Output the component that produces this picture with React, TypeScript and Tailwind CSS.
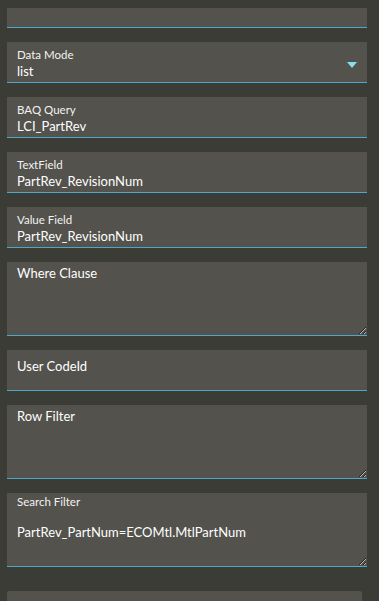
import React from "react";

const font = { fontFamily: '"Lato", "Noto Sans", sans-serif' };

function InputField({ label, value }: { label: string; value: string }) {
  return (
    <div className="h-[41px] bg-[#53524c] border-b border-[#4ea6cf] px-[10px] pt-[6px]">
      <div className="text-[11.5px] leading-[14px] text-[#f2f2f2]">{label}</div>
      <div className="text-[13px] leading-[18px] text-white">{value}</div>
    </div>
  );
}

function AreaField({ label, value }: { label: string; value?: string }) {
  return (
    <div className="h-[74px] bg-[#53524c] border-b border-[#4ea6cf] flex flex-col">
      {value ? (
        <div className="px-[10px] pt-[2px] text-[11.5px] leading-[14px] text-[#f2f2f2]">{label}</div>
      ) : (
        <div className="px-[10px] pt-[2px] text-[13px] leading-[18px] text-white">{label}</div>
      )}
      <textarea
        readOnly
        value={value ?? ""}
        className={`flex-1 w-full bg-transparent text-white text-[13px] leading-[18px] px-[10px] outline-none resize-y ${value ? "pt-[14px]" : ""}`}
        style={font}
      />
    </div>
  );
}

export default function App() {
  return (
    <div className="min-h-[601px] bg-[#3c3c37] pl-[7px] pr-[12px] pt-[8px] overflow-hidden" style={font}>
      <div className="flex flex-col gap-[14px]">
        <div className="h-[20px] bg-[#53524c] border-b border-[#4ea6cf]" />

        <div className="relative h-[41px] bg-[#53524c] border-b border-[#4ea6cf] px-[10px] pt-[6px]">
          <div className="text-[11.5px] leading-[14px] text-[#f2f2f2]">Data Mode</div>
          <div className="text-[13px] leading-[18px] text-white">list</div>
          <svg className="absolute right-[10px] top-[20px]" width="10" height="6" viewBox="0 0 10 6">
            <path d="M0 0 H10 L5 6 Z" fill="#86def4" />
          </svg>
        </div>

        <InputField label="BAQ Query" value="LCI_PartRev" />
        <InputField label="TextField" value="PartRev_RevisionNum" />
        <InputField label="Value Field" value="PartRev_RevisionNum" />

        <AreaField label="Where Clause" />

        <div className="h-[41px] bg-[#53524c] border-b border-[#4ea6cf] px-[10px] pt-[7px]">
          <div className="text-[13px] leading-[18px] text-white">User CodeId</div>
        </div>

        <AreaField label="Row Filter" />
        <AreaField label="Search Filter" value="PartRev_PartNum=ECOMtl.MtlPartNum" />
      </div>

      <div className="mt-[24px] mr-[5px] h-[40px] bg-[#53524c] rounded-t-[2px]" />
    </div>
  );
}
